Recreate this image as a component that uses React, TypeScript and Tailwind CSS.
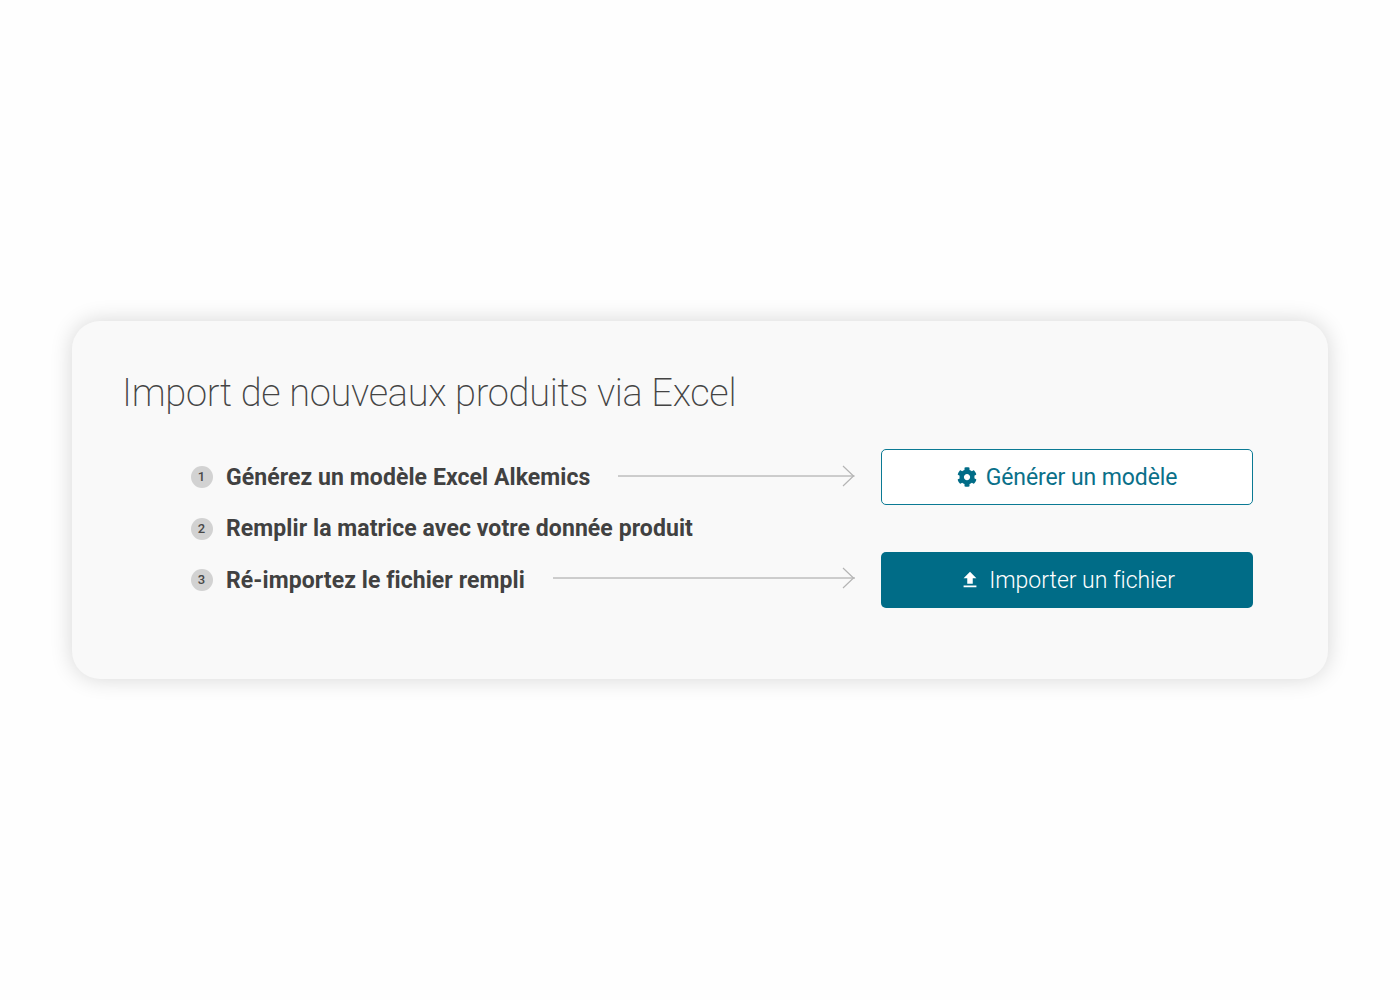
import { FaCog } from "react-icons/fa"
import { MdFileUpload } from "react-icons/md"

const font = "font-['Roboto','Liberation_Sans',sans-serif]"

const Step = ({ n, label, className }: { n: number; label: string; className?: string }) => (
    <div className="flex items-center">
        <span className="flex h-[22px] w-[22px] items-center justify-center rounded-full bg-[#d2d2d2] pr-px text-[13px] font-medium text-[#484848]">{n}</span>
        <span className={`ml-[13px] whitespace-nowrap text-[23px] leading-[28px] font-bold tracking-[0.08px] text-[#414141] ${className ?? ""}`}>{label}</span>
    </div>
)

const Arrow = ({ className }: { className?: string }) => (
    <div className={`mr-[26px] ml-[28px] flex h-[14px] flex-1 items-center ${className ?? ""}`}>
        <svg className="h-[22px] w-full text-[#a0a0a0]" preserveAspectRatio="none" viewBox="0 0 100 22" fill="none">
            <line x1="0" y1="11" x2="100" y2="11" stroke="currentColor" strokeWidth="1" vectorEffect="non-scaling-stroke" />
        </svg>
        <svg className="-ml-[13px] h-[22px] w-[13px] shrink-0 text-[#b4b4b4]" viewBox="0 0 13 22" fill="none">
            <path d="M1 1 L11.5 11 L1 21" stroke="currentColor" strokeWidth="1.2" />
        </svg>
    </div>
)

export default function App() {
    return (
        <div className={`${font} min-h-[1000px] bg-[#fefefe] px-[72px] pt-[321px]`}>
            <div className="h-[358px] rounded-[28px] bg-[#f9f9f9] pt-[48px] pr-[75px] pl-[50px] shadow-[0_0_22px_rgba(0,0,0,0.16)]">
                <h1 className="text-[38px] leading-[48px] font-extralight tracking-[-0.3px] text-[#444444]">Import de nouveaux produits via Excel</h1>
                <div className="mt-[32px] ml-[69px] flex flex-col">
                    <div className="flex h-[56px] items-center">
                        <Step n={1} label="Générez un modèle Excel Alkemics" className="translate-y-px" />
                        <Arrow className="-translate-y-px" />
                        <button className="flex h-[56px] w-[372px] shrink-0 items-center justify-center gap-[9px] rounded-[5px] border border-[#0b7a94] bg-white text-[23px] tracking-[-0.1px] text-[#0a7089]">
                            <FaCog className="h-[20px] w-[20px] text-[#006c87]" />
                            <span className="translate-y-px">Générer un modèle</span>
                        </button>
                    </div>
                    <div className="flex h-[47px] items-center">
                        <Step n={2} label="Remplir la matrice avec votre donnée produit" />
                    </div>
                    <div className="flex h-[56px] items-center">
                        <Step n={3} label="Ré-importez le fichier rempli" className="translate-y-px" />
                        <Arrow className="-translate-y-[2px]" />
                        <button className="flex h-[56px] w-[372px] shrink-0 items-center justify-center gap-[8px] rounded-[5px] bg-[#006c87] text-[23px] font-light tracking-[-0.02px] text-white">
                            <MdFileUpload className="h-[22px] w-[22px]" />
                            <span className="translate-y-px">Importer un fichier</span>
                        </button>
                    </div>
                </div>
            </div>
        </div>
    )
}
